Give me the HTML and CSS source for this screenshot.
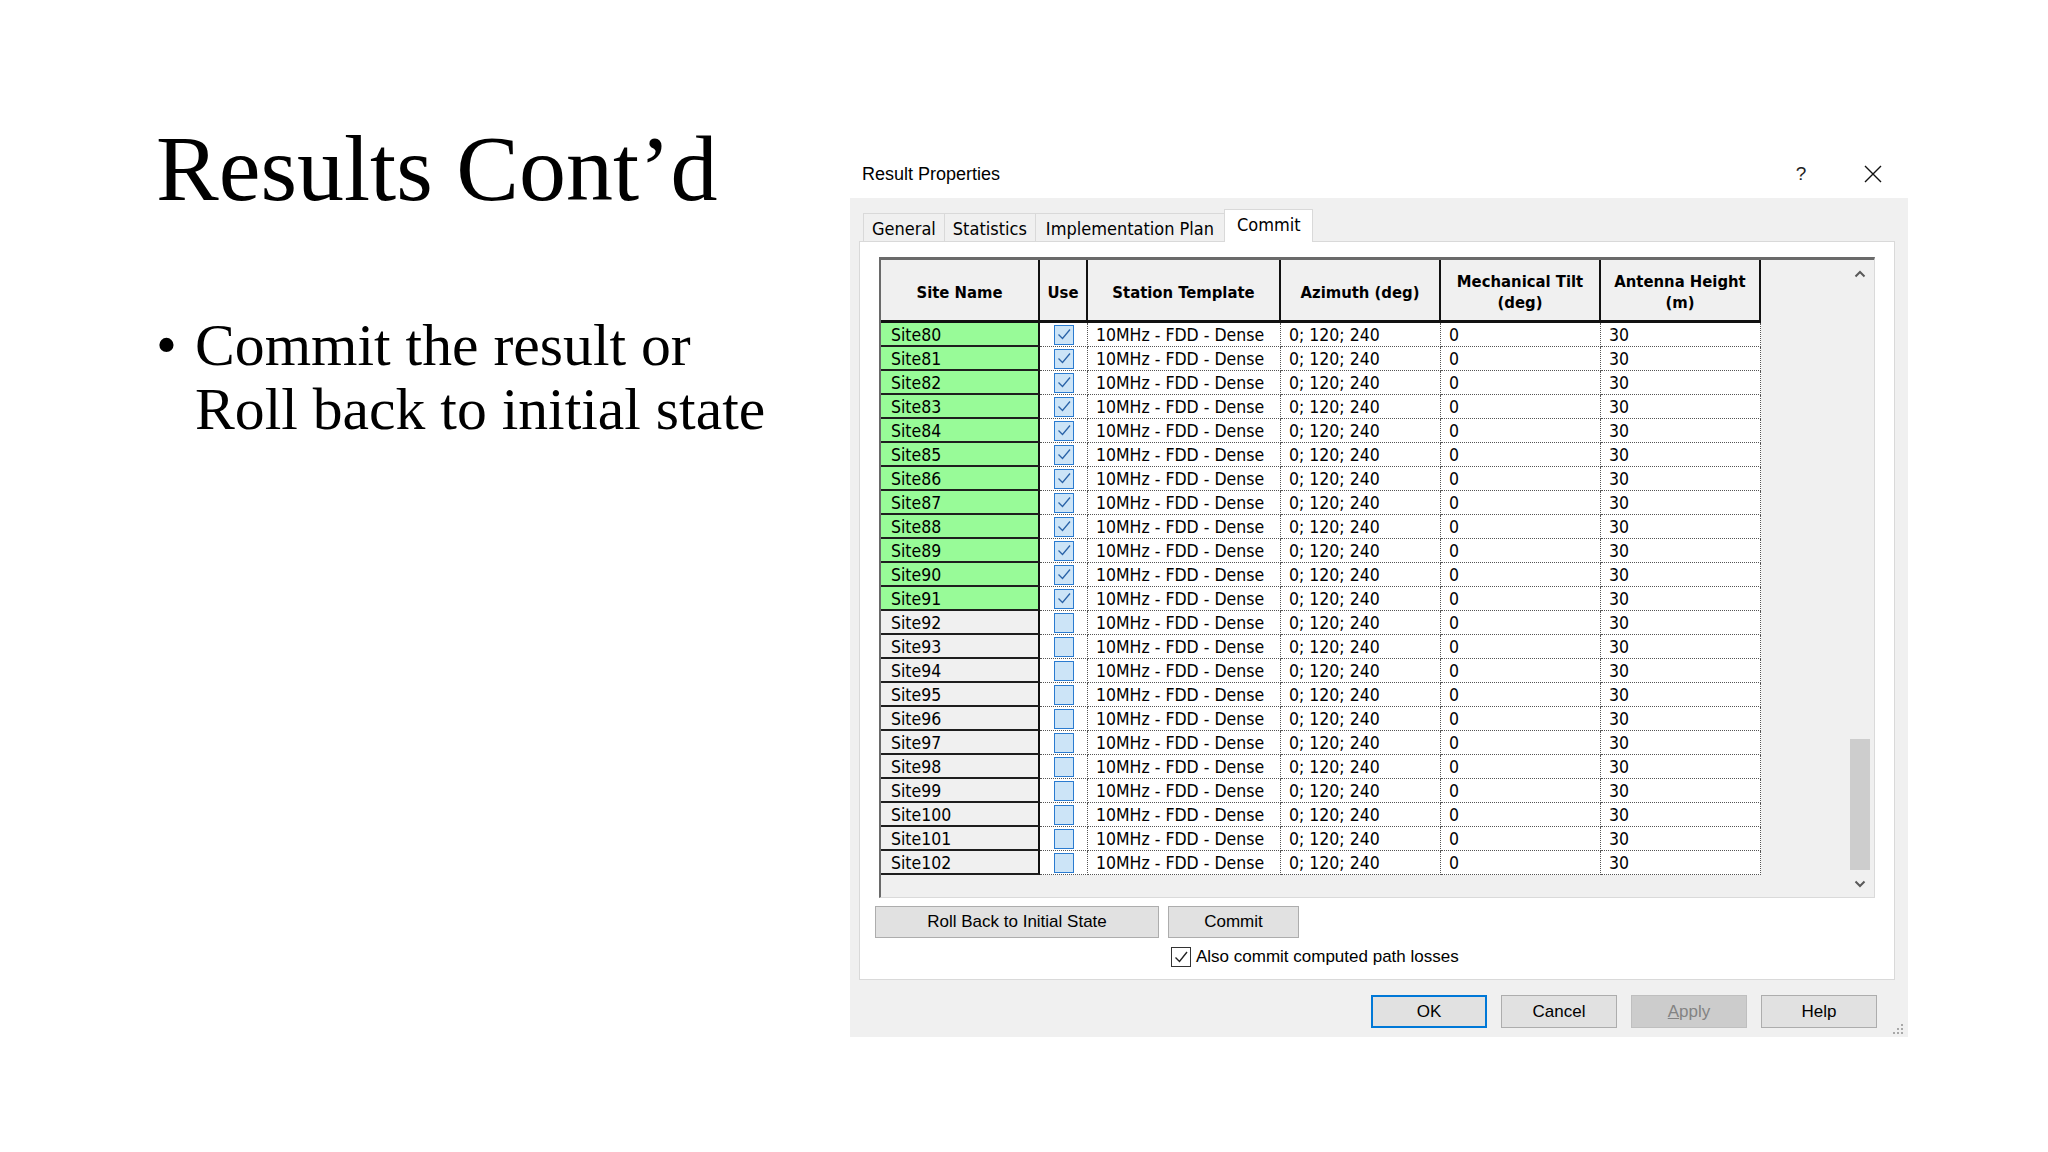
FILE: index.html
```html
<!DOCTYPE html>
<html lang="en">
<head>
<meta charset="utf-8">
<title>Results Cont'd</title>
<link rel="stylesheet" href="styles.css">
</head>
<body>
<div class="slide">
  <div class="text-col">
    <h1 class="title">Results Cont’d</h1>
    <ul class="bullets">
      <li class="bullet-item"><span class="dot">•</span><span class="bullet-text">Commit the result or<br>Roll back to initial state</span></li>
    </ul>
  </div>

  <div class="dialog">
    <div class="titlebar">
      <span class="dlg-title">Result Properties</span>
      <span class="cap-btn help">?</span>
      <span class="cap-btn close">
        <svg width="18" height="18" viewBox="0 0 18 18"><path d="M1 1 L17 17 M17 1 L1 17" stroke="#111" stroke-width="1.4" fill="none"/></svg>
      </span>
    </div>

    <div class="dlg-body">
      <div class="tabs">
        <span class="tab">General</span>
        <span class="tab">Statistics</span>
        <span class="tab tab-wide">Implementation Plan</span>
        <span class="tab tab-active">Commit</span>
      </div>

      <div class="panel">
        <div class="grid-box">
          <div class="table">
            <div class="th">Site Name</div>
            <div class="th">Use</div>
            <div class="th">Station Template</div>
            <div class="th">Azimuth (deg)</div>
            <div class="th">Mechanical Tilt<br>(deg)</div>
            <div class="th">Antenna Height<br>(m)</div>
          </div>
          <div class="table rows" id="rows"></div>
          <div class="vscroll">
            <div class="sb-btn">
              <svg width="12" height="8" viewBox="0 0 12 8"><path d="M1.5 6.5 L6 2 L10.5 6.5" stroke="#5a5a5a" stroke-width="2" fill="none"/></svg>
            </div>
            <div class="sb-track"><div class="sb-thumb"></div></div>
            <div class="sb-btn sb-down">
              <svg width="12" height="8" viewBox="0 0 12 8"><path d="M1.5 1.5 L6 6 L10.5 1.5" stroke="#5a5a5a" stroke-width="2" fill="none"/></svg>
            </div>
          </div>
        </div>

        <div class="actions">
          <button class="btn">Roll Back to Initial State</button>
          <button class="btn">Commit</button>
          <label class="chk-row">
            <span class="chk-box">
              <svg width="18" height="18" viewBox="0 0 18 18"><path d="M3.5 9.5 L7.5 13.5 L15 4" stroke="#222" stroke-width="1.4" fill="none"/></svg>
            </span>
            <span>Also commit computed path losses</span>
          </label>
        </div>
      </div>

      <div class="footer">
        <button class="btn fbtn btn-default">OK</button>
        <button class="btn fbtn">Cancel</button>
        <button class="btn fbtn btn-disabled"><u>A</u>pply</button>
        <button class="btn fbtn">Help</button>
      </div>

      <svg class="grip" width="14" height="14" viewBox="0 0 14 14">
        <rect x="10" y="2" width="2" height="2" fill="#a8a8a8"/>
        <rect x="6" y="6" width="2" height="2" fill="#a8a8a8"/>
        <rect x="10" y="6" width="2" height="2" fill="#a8a8a8"/>
        <rect x="2" y="10" width="2" height="2" fill="#a8a8a8"/>
        <rect x="6" y="10" width="2" height="2" fill="#a8a8a8"/>
        <rect x="10" y="10" width="2" height="2" fill="#a8a8a8"/>
      </svg>
    </div>
  </div>
</div>
<script src="app.js"></script>
</body>
</html>
```

FILE: app.js
```js
(function () {
  var rows = document.getElementById('rows');
  var checkSvg = '<svg width="18" height="17" viewBox="0 0 18 17"><path d="M3.5 8.5 L7.5 12.5 L15 3.5" stroke="#2a63a8" stroke-width="1.3" fill="none"/></svg>';
  var html = '';
  for (var n = 80; n <= 102; n++) {
    var used = n <= 91;
    html += '<div class="td site' + (used ? ' site-used' : '') + '">Site' + n + '</div>';
    html += '<div class="td use"><span class="cbx">' + (used ? checkSvg : '') + '</span></div>';
    html += '<div class="td">10MHz - FDD - Dense</div>';
    html += '<div class="td">0; 120; 240</div>';
    html += '<div class="td">0</div>';
    html += '<div class="td">30</div>';
  }
  rows.innerHTML = html;
})();
```

FILE: styles.css
```css
* { box-sizing: border-box; }

html, body {
  margin: 0;
  padding: 0;
  background: #ffffff;
}

body {
  width: 2048px;
  height: 1152px;
  overflow: hidden;
}

.slide {
  display: flex;
  width: 2048px;
  height: 1152px;
  padding-left: 156px;
}

/* ---------- slide text ---------- */
.text-col {
  width: 694px;
  flex: none;
}

.title {
  margin: 0;
  padding-top: 121px;
  font-family: "Liberation Serif", "Times New Roman", serif;
  font-weight: 400;
  font-size: 94px;
  line-height: 94px;
  color: #000;
  white-space: nowrap;
}

.bullets {
  list-style: none;
  margin: 98px 0 0 0;
  padding: 0;
}

.bullet-item {
  display: flex;
  font-family: "Liberation Serif", "Times New Roman", serif;
  font-size: 59.7px;
  line-height: 64px;
  color: #000;
  white-space: nowrap;
}

.dot {
  width: 39px;
  flex: none;
}

/* ---------- dialog ---------- */
.dialog {
  width: 1058px;
  height: 887px;
  margin-top: 150px;
  flex: none;
  display: flex;
  flex-direction: column;
  font-family: "Liberation Sans", Arial, sans-serif;
  color: #000;
}

.titlebar {
  height: 48px;
  display: flex;
  align-items: center;
  background: #ffffff;
}

.dlg-title {
  flex: 1;
  padding-left: 12px;
  font-size: 18px;
}

.cap-btn {
  width: 70px;
  height: 48px;
  display: flex;
  align-items: center;
  justify-content: center;
}

.help {
  margin-right: 2px;
  font-size: 19px;
  color: #222;
}

.dlg-body {
  position: relative;
  flex: 1;
  background: #f0f0f0;
  padding: 11px 0 9px 0;
  display: flex;
  flex-direction: column;
}

/* tabs */
.tabs {
  height: 32px;
  margin-left: 13px;
  display: flex;
  align-items: flex-end;
  position: relative;
  z-index: 1;
}

.tab {
  height: 28px;
  padding: 2px 8px 0 8px;
  margin-right: -1px;
  border: 1px solid #d9d9d9;
  border-bottom: none;
  background: #f0f0f0;
  font-family: "DejaVu Sans Condensed", "DejaVu Sans", sans-serif;
  font-size: 18px;
  line-height: 25px;
  white-space: nowrap;
  color: #000;
}

.tab-wide {
  padding: 2px 10px 0 10px;
}

.tab-active {
  height: 33px;
  margin-bottom: -1px;
  padding: 2px 11px 5px 12px;
  background: #ffffff;
}

/* panel */
.panel {
  height: 739px;
  margin: 0 13px 0 9px;
  border: 1px solid #d9d9d9;
  background: #ffffff;
  padding: 15px 0 12px 0;
  display: flex;
  flex-direction: column;
}

.grid-box {
  height: 641px;
  margin: 0 19px;
  border-top: 3px solid #6a6a6a;
  border-left: 2px solid #6a6a6a;
  border-right: 1px solid #dadada;
  border-bottom: 1px solid #dadada;
  background: #f0f0f0;
  display: grid;
  grid-template-columns: 967px 24px;
  grid-template-rows: 63px 1fr;
  padding-right: 2px;
}

.table {
  display: grid;
  grid-template-columns: 159px 48px 193px 160px 160px 160px;
  width: 880px;
  grid-column: 1;
}

.rows {
  grid-row: 2;
  grid-auto-rows: 24px;
  align-content: start;
}

.th {
  display: flex;
  align-items: center;
  justify-content: center;
  text-align: center;
  background: #f0f0f0;
  border-right: 2px solid #111;
  border-bottom: 3px solid #111;
  font-family: "DejaVu Sans Condensed", "DejaVu Sans", sans-serif;
  font-weight: 700;
  font-size: 16.5px;
  line-height: 21px;
  padding-top: 4px;
  color: #000;
}

.td {
  height: 24px;
  background: #ffffff;
  border-right: 1px dotted #555;
  border-bottom: 1px dotted #555;
  padding-left: 8px;
  padding-top: 1px;
  font-family: "DejaVu Sans Condensed", "DejaVu Sans", sans-serif;
  font-size: 17.5px;
  line-height: 22px;
  white-space: nowrap;
  color: #000;
}

.site {
  background: #f0f0f0;
  border-right: 2px solid #111;
  border-bottom: 2px solid #1e1e1e;
  padding-left: 10px;
  padding-top: 2px;
  line-height: 21px;
}

.site-used {
  background: #98fb98;
}

.use {
  display: flex;
  align-items: center;
  justify-content: center;
  padding-left: 0;
  padding-top: 0;
}

.cbx {
  width: 20px;
  height: 20px;
  border: 1px solid #2a7bd0;
  background: #cce4f7;
  display: flex;
  align-items: center;
  justify-content: center;
}

/* scrollbar */
.vscroll {
  grid-column: 2;
  grid-row: 1 / 3;
  display: flex;
  flex-direction: column;
  background: #f0f0f0;
}

.sb-btn {
  height: 28px;
  display: flex;
  align-items: center;
  justify-content: center;
}

.sb-down {
  height: 27px;
}

.sb-track {
  flex: 1;
  display: flex;
  flex-direction: column;
  justify-content: flex-end;
  padding: 0 2px;
}

.sb-thumb {
  height: 131px;
  background: #cdcdcd;
}

/* action buttons */
.actions {
  margin: 8px 0 0 15px;
  display: grid;
  grid-template-columns: 284px 131px;
  grid-template-rows: 32px 20px;
  column-gap: 9px;
  row-gap: 9px;
}

.btn {
  margin: 0;
  height: 32px;
  border: 1px solid #adadad;
  background: #e1e1e1;
  font-family: "Liberation Sans", Arial, sans-serif;
  font-size: 17px;
  color: #000;
  padding: 0;
}

.chk-row {
  grid-column: 2;
  grid-row: 2;
  padding-left: 3px;
  display: flex;
  align-items: center;
  gap: 5px;
  white-space: nowrap;
  font-size: 17px;
  color: #000;
}

.chk-box {
  width: 20px;
  height: 20px;
  flex: none;
  border: 1px solid #333;
  background: #fff;
  display: flex;
  align-items: center;
  justify-content: center;
}

/* footer */
.footer {
  margin-top: 15px;
  padding-right: 31px;
  display: flex;
  justify-content: flex-end;
  gap: 14px;
}

.fbtn {
  width: 116px;
  height: 33px;
}

.btn-default {
  border: 2px solid #0078d7;
}

.btn-disabled {
  background: #cccccc;
  border-color: #bfbfbf;
  color: #838383;
}

.grip {
  position: absolute;
  right: 3px;
  bottom: 1px;
}
```
